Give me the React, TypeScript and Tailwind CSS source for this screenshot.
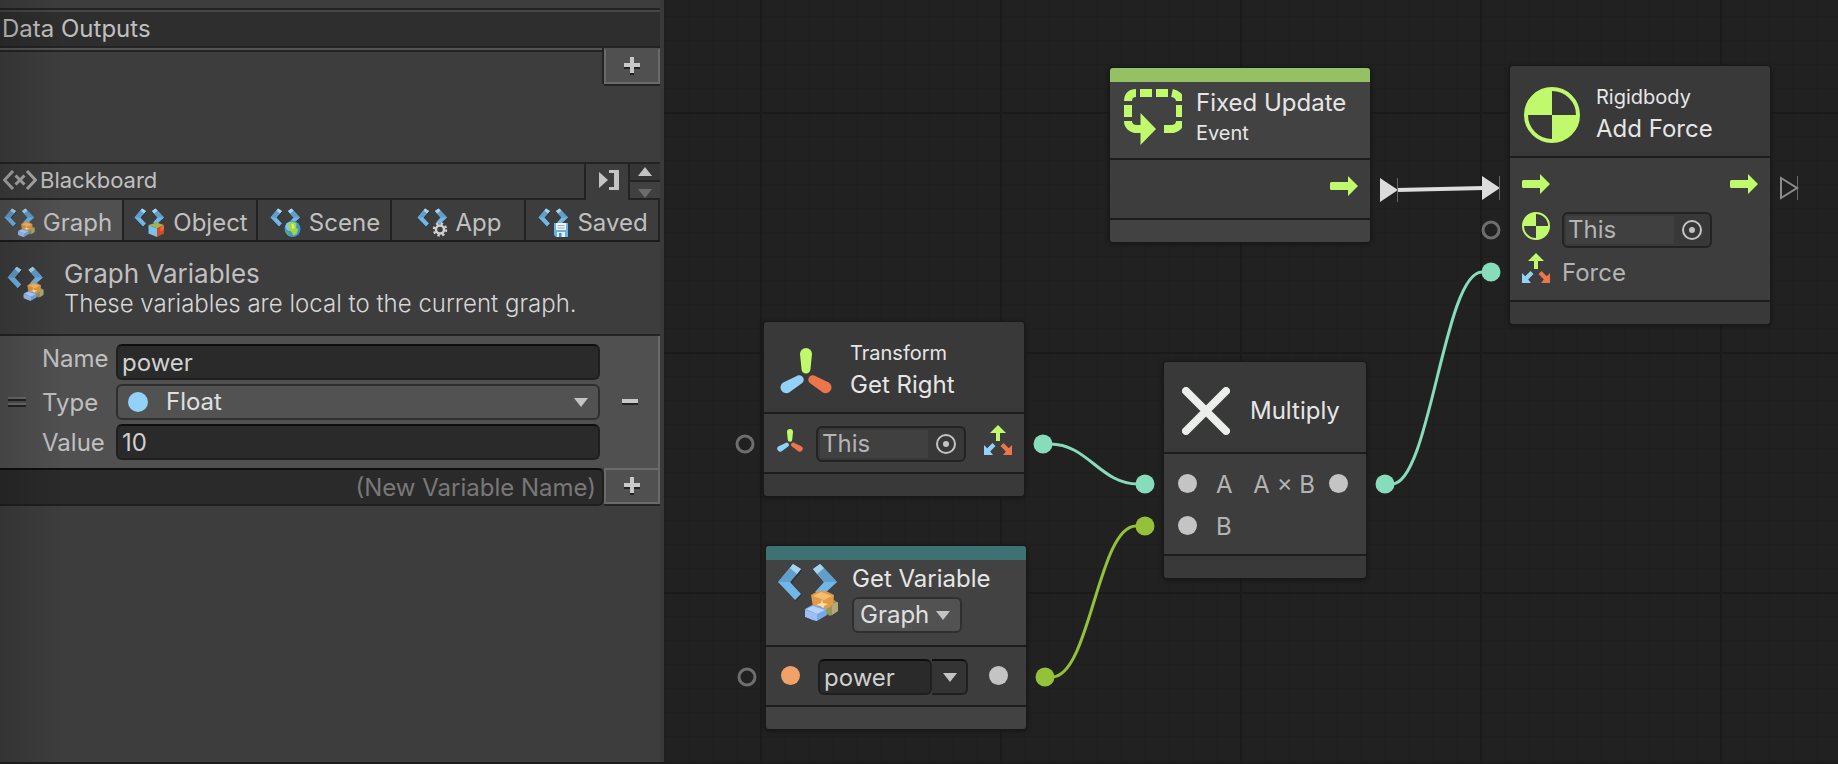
import React from "react";

type BadgeKind = "graph" | "object" | "scene" | "app" | "saved";

function Badge({ kind }: { kind: BadgeKind }) {
  switch (kind) {
    case "graph":
      return (
        <g>
          <path d="M49 38l7-2 5 4v8l-8 5-6-4z" fill="#8f9a55" />
          <path d="M55 41l6-2v9l-6 4z" fill="#b3a878" />
          <path d="M34 32l7-4h8l8 4-1 10-8 5-12-3z" fill="#e09a48" />
          <path d="M36 33l8-4 11 4-8 4z" fill="#f3bd72" />
          <path d="M45 36l1 4 5 1-4 2-1 4-2-4-5-1 5-2z" fill="#ffe1a4" />
          <path d="M28 46l7-4 7 1 7 3 1 6-10 6-5-1-7-4z" fill="#79a7e6" />
          <path d="M29 46l7-3 12 4-8 4z" fill="#b6d2fa" />
          <path d="M28 47l12 4v7l-12-4z" fill="#9cc0f4" />
        </g>
      );
    case "object":
      return (
        <g>
          <path d="M29 34l16-5 15 5-14 7z" fill="#a3b04e" />
          <path d="M29 34l17 7v17l-17-7z" fill="#7cc0ee" />
          <path d="M60 34l-14 7v17l14-7z" fill="#d64a22" />
          <path d="M53 38l7-4v9l-7 4z" fill="#ec6a3c" />
        </g>
      );
    case "scene":
      return (
        <g>
          <circle cx="45" cy="42" r="16" fill="#3f95d8" />
          <circle cx="40" cy="37" r="9" fill="#7cc6f2" />
          <path d="M40 29c5-2 10-1 13 2l-1 8 4 4-3 9-6 3-4-7-5-5-1-9z" fill="#a6d83c" />
          <path d="M43 32l5 1 1 7-5 2z" fill="#d8f56a" />
          <path d="M31 45l7 4 1 7c-4-2-7-6-8-11z" fill="#5cb83a" />
        </g>
      );
    case "app":
      return (
        <g fill="none" stroke="#cfcfcf">
          <circle cx="46" cy="43" r="8" strokeWidth="5" />
          <circle cx="46" cy="43" r="12" strokeWidth="5" strokeDasharray="4.7 4.72" />
        </g>
      );
    case "saved":
      return (
        <g>
          <path d="M32 30h28v28H36l-4-4z" fill="#62b2ec" />
          <path d="M36 30h20v14H36z" fill="#f2f6f8" />
          <path d="M39 34h14v2H39zM39 39h14v2H39z" fill="#9aa5ac" />
          <path d="M38 48h16v10H38z" fill="#e8eef2" />
          <path d="M42 50h5v8h-5z" fill="#4b8fc6" />
        </g>
      );
  }
}

function VariablesIcon({ kind, className }: { kind: BadgeKind; className?: string }) {
  return (
    <svg viewBox="0 0 62 60" className={className} aria-hidden="true">
      <path d="M17 3l8 5-10 12 10 12-6 6L2 21z" fill="#242424" opacity="0.5" />
      <path d="M16 1l8 5-11 13 11 12-6 6L1 19z" fill="#70b6e8" />
      <path d="M13 5l7 6-7 8H1z" fill="#5f9fca" />
      <path d="M16 1l8 5-4 5-7-6z" fill="#a9d4ee" />
      <path d="M43 1l17 18-14 13-8-3 9-10L36 6z" fill="#70b6e8" />
      <path d="M47 5l13 14H47l-7-8z" fill="#5f9fca" />
      <path d="M43 1l4 4-7 6-4-5z" fill="#a9d4ee" />
      <Badge kind={kind} />
    </svg>
  );
}

function PlusIcon() {
  return (
    <svg viewBox="0 0 16 18" className="h-[18px] w-4" aria-hidden="true">
      <path d="M6 2h4v6h6v4h-6v6H6v-6H0V8h6z" fill="#222" />
      <path d="M6 0h4v6h6v4h-6v6H6v-6H0V6h6z" fill="#c8c8c8" />
    </svg>
  );
}

function DownTriangle() {
  return (
    <svg viewBox="0 0 14 9" className="h-[9px] w-3.5 shrink-0" aria-hidden="true">
      <path d="M0 0h14L7 9z" fill="#c4c4c4" />
    </svg>
  );
}

function FlowArrow() {
  return (
    <svg viewBox="0 0 28 20" className="h-5 w-7" aria-hidden="true">
      <path d="M1.500 6H18V0l10 10-10 10v-6H1.500A1.500 1.500 0 0 1 0 12.500v-5A1.500 1.500 0 0 1 1.500 6z" fill="#c0f96c" />
    </svg>
  );
}

function RigidbodyIcon({ className, ring }: { className: string; ring: number }) {
  const r = 28 - ring / 2;
  return (
    <svg viewBox="0 0 56 56" className={className} aria-hidden="true">
      <circle cx="28" cy="28" r={r} fill="none" stroke="#c0f96c" strokeWidth={ring} />
      <path d="M28 28V1A27 27 0 0 0 1 28zM28 28v27a27 27 0 0 0 27-27z" fill="#c0f96c" />
    </svg>
  );
}

function TransformIcon({ className }: { className: string }) {
  return (
    <svg viewBox="0 0 52 46" className={className} aria-hidden="true">
      <path d="M20 6a6 6 0 0 1 12 0l-1.500 15a4.500 4.500 0 0 1-9 0z" fill="#c0f96c" />
      <path d="M3.200 34.500l13-6.200a4.500 4.500 0 0 1 6 6.800L9.500 44.300a5.700 5.700 0 0 1-6.300-9.800z" fill="#93d2f8" />
      <path d="M48.800 34.500l-13-6.200a4.500 4.500 0 0 0-6 6.800l12.700 9.200a5.700 5.700 0 0 0 6.300-9.800z" fill="#ec754b" />
    </svg>
  );
}

function VectorIcon() {
  return (
    <svg viewBox="0 0 28 30" className="h-[30px] w-7" aria-hidden="true">
      <path d="M14 0l8 8h-6v8h-4V8H6z" fill="#c0f96c" />
      <path d="M0 30V20l3.200 3.200L8.500 18l3 3-5.300 5.500L9 30z" fill="#93d2f8" />
      <path d="M28 30V20l-3.200 3.200L19.500 18l-3 3 5.300 5.500L19 30z" fill="#ec754b" />
    </svg>
  );
}

function LoopIcon() {
  return (
    <svg viewBox="2 -2 60 60" className="h-15 w-15" aria-hidden="true">
      <g fill="none" stroke="#c0f96c" strokeWidth="8">
        <path d="M8 12C8 7 11 4 16 4" />
        <path d="M20 4h12M36 4h12" />
        <path d="M52 4c5 1 8 4 8 8" />
        <path d="M8 16v12M60 16v12" />
        <path d="M8 32c0 5 4 8 9 8h5" />
        <path d="M60 32c0 5-4 8-9 8h-7" />
      </g>
      <path d="M20.500 24L36 40 20.500 56z" fill="#c0f96c" />
    </svg>
  );
}

function MultiplyIcon() {
  return (
    <svg viewBox="0 0 48 48" className="size-12" aria-hidden="true">
      <path d="M4 4l40 40M44 4L4 44" stroke="#eceeec" strokeWidth="8" strokeLinecap="round" />
    </svg>
  );
}

function ValueDot({ className }: { className: string }) {
  return <span className={`size-[19px] shrink-0 rounded-full ${className}`} />;
}

function ObjectField({ label }: { label: string }) {
  return (
    <div className="flex h-9 w-[150px] overflow-hidden rounded-md border-2 border-[#232323] bg-[#383838]">
      <input
        aria-label={label}
        defaultValue="This"
        className="my-0.5 ml-0.5 w-[108px] bg-[#404040] pl-0.5 text-2xl text-[#b4b4b4] outline-none"
      />
      <button type="button" aria-label="Pick object" className="flex flex-1 items-center justify-center">
        <svg viewBox="0 0 20 20" className="size-5" aria-hidden="true">
          <circle cx="10" cy="10" r="9" fill="none" stroke="#c4c4c4" strokeWidth="2" />
          <circle cx="10" cy="10" r="3" fill="#c4c4c4" />
        </svg>
      </button>
    </div>
  );
}

interface NodeProps {
  place: string;
  strip?: string;
  icon: React.ReactNode;
  header: React.ReactNode;
  headerClass: string;
  children: React.ReactNode;
  tone?: string;
}

function GraphNode({ place, strip, icon, header, headerClass, children, tone = "bg-[#393939]" }: NodeProps) {
  return (
    <article
      className={`absolute flex flex-col overflow-hidden rounded-[3px] shadow-[0_0_0_1px_#191919,0_1px_4px_1px_#151515] ${place} ${tone}`}
    >
      {strip && <div className={`h-3.5 ${strip}`} />}
      <header className={`flex border-b-2 border-[#1c1c1c] pl-3 ${headerClass}`}>
        <div className="flex size-15 shrink-0 items-center justify-center">{icon}</div>
        <div className="ml-3.5 flex flex-col items-start text-2xl leading-9 text-[#e6e6e6]">{header}</div>
      </header>
      <div className="flex flex-col gap-1.5 bg-[#3d3d3d] px-3 pt-3 pb-2.5">{children}</div>
      <div className="h-6 border-t-2 border-[#1c1c1c]" />
    </article>
  );
}

function Wires() {
  return (
    <svg className="pointer-events-none absolute inset-0 size-full" aria-hidden="true">
      <g fill="none" strokeWidth="3">
        <path d="M386 444C424 444 436 484 474 484" stroke="#86dcbb" />
        <path d="M388 677C426 677 434 526 472 526" stroke="#93c13a" />
        <path d="M728 484C766 484 780 272 818 272" stroke="#86dcbb" />
        <path d="M733 190L820 188" stroke="#dedede" strokeWidth="4" />
      </g>
      <g fill="#dcdcdc">
        <path d="M716 178l18 12-18 12z" />
        <path d="M818 176l18 12-18 12z" />
      </g>
      <path d="M733.500 178v24M835.500 176v24M1133.500 176v24" stroke="#666" />
      <path d="M1117 178l16 10-16 10z" fill="none" stroke="#8c8c8c" strokeWidth="2" />
      <g fill="none" stroke="#6e6e6e" strokeWidth="3">
        <circle cx="827" cy="230" r="8" />
        <circle cx="81" cy="444" r="8" />
        <circle cx="83" cy="677" r="8" />
      </g>
      <g fill="#86dcbb">
        <circle cx="827" cy="272" r="9.500" />
        <circle cx="379" cy="444" r="9.500" />
        <circle cx="481" cy="484" r="9.500" />
        <circle cx="721" cy="484" r="9.500" />
      </g>
      <g fill="#93c13a">
        <circle cx="481" cy="526" r="9.500" />
        <circle cx="381" cy="677" r="9.500" />
      </g>
    </svg>
  );
}

const tabs: { label: string; kind: BadgeKind }[] = [
  { label: "Graph", kind: "graph" },
  { label: "Object", kind: "object" },
  { label: "Scene", kind: "scene" },
  { label: "App", kind: "app" },
  { label: "Saved", kind: "saved" },
];

const addButton =
  "flex h-9 w-14 items-center justify-center border-2 border-[#6a6a6a] bg-[#505050] shadow-[0_2px_0_#232323]";

function Sidebar() {
  return (
    <aside className="relative flex w-[664px] shrink-0 flex-col border-r-4 border-[#3a3a3a] bg-[#3d3d3d] text-2xl leading-8 text-[#c0c0c0]">
      <section className="flex h-[162px] flex-col pt-2">
        <h2 className="border-t-2 border-b-2 border-[#232323] bg-[#2e2e2e] pt-[3px] pb-px pl-0.5 shadow-[inset_0_2px_0_#464646]">
          Data Outputs
        </h2>
        <div className="flex h-10 items-start">
          <div className="h-1 flex-1 border-t-2 border-b-2 border-t-[#555] border-b-[#232323]" />
          <div className="h-9 w-0.5 bg-[#232323]" />
          <button type="button" aria-label="Add data output" className={`border-t-[#505050] ${addButton}`}>
            <PlusIcon />
          </button>
        </div>
      </section>

      <section>
        <div className="flex h-[38px] border-t-2 border-[#232323]">
          <h2 className="flex flex-1 items-center gap-[3px] border-r-2 border-b-2 border-[#232323] pb-0.5 pl-[3px] text-[22px]">
            <svg viewBox="0 0 34 20" className="h-5 w-[34px]" aria-hidden="true">
              <path
                d="M10 1L1.500 10 10 19M24 1l8.500 9-8.500 9M12.500 5.500l9 9M21.500 5.500l-9 9"
                fill="none"
                stroke="#a8a8a8"
                strokeWidth="3"
              />
            </svg>
            Blackboard
          </h2>
          <button type="button" aria-label="Dock panel" className="flex w-[42px] items-center justify-center pb-1 pl-1">
            <svg viewBox="0 0 20 20" className="size-5" aria-hidden="true">
              <path d="M0 2l9 8-9 8zM10 0h10v20H10v-3h5V3h-5z" fill="#c4c4c4" />
            </svg>
          </button>
          <div className="flex w-8 flex-col border-b-2 border-l-2 border-[#232323]">
            <button
              type="button"
              aria-label="Move up"
              className="flex h-[18px] items-center justify-center border-b-2 border-[#232323] bg-[#353535] pb-0.5"
            >
              <svg viewBox="0 0 14 9" className="h-[9px] w-3.5" aria-hidden="true">
                <path d="M7 0l7 9H0z" fill="#c4c4c4" />
              </svg>
            </button>
            <button type="button" aria-label="Move down" className="flex h-4 items-end justify-center bg-[#404040]">
              <svg viewBox="0 0 14 9" className="h-[9px] w-3.5" aria-hidden="true">
                <path d="M0 0h14L7 9z" fill="#6c6c6c" />
              </svg>
            </button>
          </div>
        </div>

        <div role="tablist" className="grid h-[42px] grid-cols-[124fr_134fr_134fr_134fr_134fr] border-b-2 border-[#1c1c1c]">
          {tabs.map((tab, i) => (
            <button
              key={tab.label}
              type="button"
              role="tab"
              aria-selected={i === 0}
              className={`flex items-center justify-center gap-2 border-r-2 border-[#232323] pt-1.5 pl-0.5 ${
                i === 0 ? "bg-[#505050] pr-2" : ""
              }`}
            >
              <VariablesIcon kind={tab.kind} className="h-[30px] w-[31px] shrink-0" />
              {tab.label}
            </button>
          ))}
        </div>

        <div className="flex h-[94px] gap-5 border-b-2 border-[#232323] pt-4 pl-[7px]">
          <VariablesIcon kind="graph" className="mt-2 h-9 w-[37px]" />
          <div>
            <h3 className="text-[26px] leading-8">Graph Variables</h3>
            <p className="leading-7 font-light text-[#d6d6d6]">These variables are local to the current graph.</p>
          </div>
        </div>

        <div className="flex items-center border-r-2 border-[#6a6a6a] bg-[#505050] py-2">
          <svg viewBox="0 0 18 10" className="mr-4 ml-2 h-2.5 w-[18px]" aria-hidden="true">
            <path d="M0 3h18M0 9h18" stroke="#232323" strokeWidth="2" />
            <path d="M0 1h18M0 7h18" stroke="#6a6a6a" strokeWidth="2" />
          </svg>
          <div className="grid flex-1 auto-rows-[36px] grid-cols-[74px_1fr] items-center gap-y-1">
            <label htmlFor="var-name" className="pb-1.5 leading-7">
              Name
            </label>
            <input
              id="var-name"
              defaultValue="power"
              className="h-9 min-w-0 rounded-md border-2 border-[#1f1f1f] border-t-[#0e0e0e] bg-[#2a2a2a] px-1 text-[#d0d0d0] outline-none"
            />
            <label htmlFor="var-type" className="pt-0.5">
              Type
            </label>
            <div className="flex h-9 items-center rounded-md border-2 border-[#2f2f2f] bg-[#525252] pr-2.5 pl-2.5">
              <span className="size-5 rounded-full bg-[#93d2f8]" />
              <select id="var-type" className="ml-[18px] flex-1 appearance-none bg-transparent text-[#e0e0e0] outline-none">
                <option>Float</option>
              </select>
              <DownTriangle />
            </div>
            <label htmlFor="var-value" className="pt-0.5">
              Value
            </label>
            <input
              id="var-value"
              defaultValue="10"
              className="h-9 min-w-0 rounded-md border-2 border-[#1f1f1f] border-t-[#0e0e0e] bg-[#2a2a2a] px-1 text-[#d0d0d0] outline-none"
            />
          </div>
          <button type="button" aria-label="Remove variable" className="flex w-[58px] justify-center pl-0.5">
            <span className="h-1.5 w-4 border-b-2 border-[#232323] bg-[#c8c8c8]" />
          </button>
        </div>

        <div className="flex h-[38px]">
          <input
            aria-label="New variable name"
            placeholder="(New Variable Name)"
            className="min-w-0 flex-1 rounded-r-md border-2 border-l-0 border-[#1f1f1f] border-t-[#0e0e0e] bg-[#2a2a2a] pt-0.5 pr-1.5 text-right outline-none placeholder:text-[#787878]"
          />
          <button type="button" aria-label="Add variable" className={addButton}>
            <PlusIcon />
          </button>
        </div>
      </section>
      <div className="pointer-events-none absolute inset-y-0 left-0 w-16 bg-linear-to-r from-black/15 to-transparent" />
    </aside>
  );
}

export default function App() {
  return (
    <div className="flex min-h-screen border-b-2 border-[#1c1c1c] bg-[#212121] font-['Inter',sans-serif]">
      <Sidebar />
      <main className="relative flex-1 overflow-hidden bg-[#212121] bg-[linear-gradient(to_right,#1a1a1a_2px,transparent_2px),linear-gradient(to_bottom,#1a1a1a_2px,transparent_2px),linear-gradient(to_right,#1f1f1f_1px,transparent_1px),linear-gradient(to_bottom,#1f1f1f_1px,transparent_1px)] bg-size-[240px_240px,240px_240px,24px_24px,24px_24px] bg-position-[96px_112px,96px_112px,0px_16px,0px_16px]">
        <Wires />

        <GraphNode
          place="left-[446px] top-[68px] w-[260px]"
          strip="bg-[#94c164]"
          tone="bg-[#424242]"
          icon={<LoopIcon />}
          headerClass="h-[78px] pt-[5px]"
          header={
            <>
              <span className="leading-8">Fixed Update</span>
              <span className="text-xl leading-7">Event</span>
            </>
          }
        >
          <div className="flex h-9 items-center justify-end pb-2">
            <FlowArrow />
          </div>
        </GraphNode>

        <GraphNode
          place="left-[846px] top-[66px] w-[260px]"
          icon={<RigidbodyIcon className="size-14" ring={4} />}
          headerClass="items-center h-[92px] pt-2"
          header={
            <>
              <span className="text-xl leading-7">Rigidbody</span>
              <span>Add Force</span>
            </>
          }
        >
          <div className="flex h-9 items-center justify-between pb-2">
            <FlowArrow />
            <FlowArrow />
          </div>
          <div className="flex h-9 items-center gap-3">
            <RigidbodyIcon className="mb-2 size-7" ring={4} />
            <ObjectField label="Rigidbody target" />
          </div>
          <div className="flex h-9 items-center gap-3 text-2xl text-[#b4b4b4]">
            <span className="mb-2">
              <VectorIcon />
            </span>
            <span className="pt-0.5">Force</span>
          </div>
        </GraphNode>

        <GraphNode
          place="left-[100px] top-[322px] w-[260px]"
          icon={<TransformIcon className="h-[46px] w-[52px]" />}
          headerClass="items-center h-[92px] pt-2"
          header={
            <>
              <span className="text-xl leading-7">Transform</span>
              <span>Get Right</span>
            </>
          }
        >
          <div className="flex h-9 items-center gap-3">
            <span className="flex w-7 justify-center pb-2">
              <TransformIcon className="h-[23px] w-[26px]" />
            </span>
            <ObjectField label="Transform target" />
            <span className="ml-auto pb-2">
              <VectorIcon />
            </span>
          </div>
        </GraphNode>

        <GraphNode
          place="left-[102px] top-[546px] w-[260px]"
          strip="bg-[#3d7173]"
          tone="bg-[#424242]"
          icon={<VariablesIcon kind="graph" className="h-15 w-[62px] shrink-0" />}
          headerClass="h-[87px] pt-[3px]"
          header={
            <>
              <span className="leading-8">Get Variable</span>
              <label className="relative mt-0.5 flex h-9 items-center gap-1 rounded-md border-2 border-[#2f2f2f] bg-[#525252] pr-2.5 pl-1.5 text-[#e0e0e0]">
                <select aria-label="Variable scope" className="w-[72px] appearance-none bg-transparent outline-none">
                  <option>Graph</option>
                </select>
                <DownTriangle />
              </label>
            </>
          }
        >
          <div className="flex h-9 items-center">
            <ValueDot className="mb-1 ml-[3px] bg-[#f2a269]" />
            <input
              aria-label="Variable name"
              defaultValue="power"
              className="ml-[18px] h-9 w-[114px] rounded-md border-2 border-[#1f1f1f] border-t-[#0e0e0e] bg-[#2a2a2a] px-1 text-2xl text-[#d0d0d0] outline-none"
            />
            <button
              type="button"
              aria-label="Choose variable"
              className="flex h-9 w-9 items-center justify-center rounded-r-md border-2 border-l-0 border-[#1f1f1f] border-t-[#0e0e0e] bg-[#343434] pl-0.5"
            >
              <DownTriangle />
            </button>
            <ValueDot className="mr-1.5 mb-1 ml-auto bg-[#c4c4c4]" />
          </div>
        </GraphNode>

        <GraphNode
          place="left-[500px] top-[362px] w-[202px]"
          icon={<MultiplyIcon />}
          headerClass="items-center h-[92px] pt-2"
          header={<span>Multiply</span>}
        >
          <div className="flex h-9 items-center text-2xl text-[#b4b4b4]">
            <ValueDot className="mb-0.5 ml-0.5 bg-[#c4c4c4]" />
            <span className="ml-[19px] pt-0.5">A</span>
            <span className="ml-auto pt-0.5">A × B</span>
            <ValueDot className="mr-1.5 mb-0.5 ml-3.5 bg-[#c4c4c4]" />
          </div>
          <div className="flex h-9 items-center text-2xl text-[#b4b4b4]">
            <ValueDot className="mb-0.5 ml-0.5 bg-[#c4c4c4]" />
            <span className="ml-[19px] pt-0.5">B</span>
          </div>
        </GraphNode>
      </main>
    </div>
  );
}
